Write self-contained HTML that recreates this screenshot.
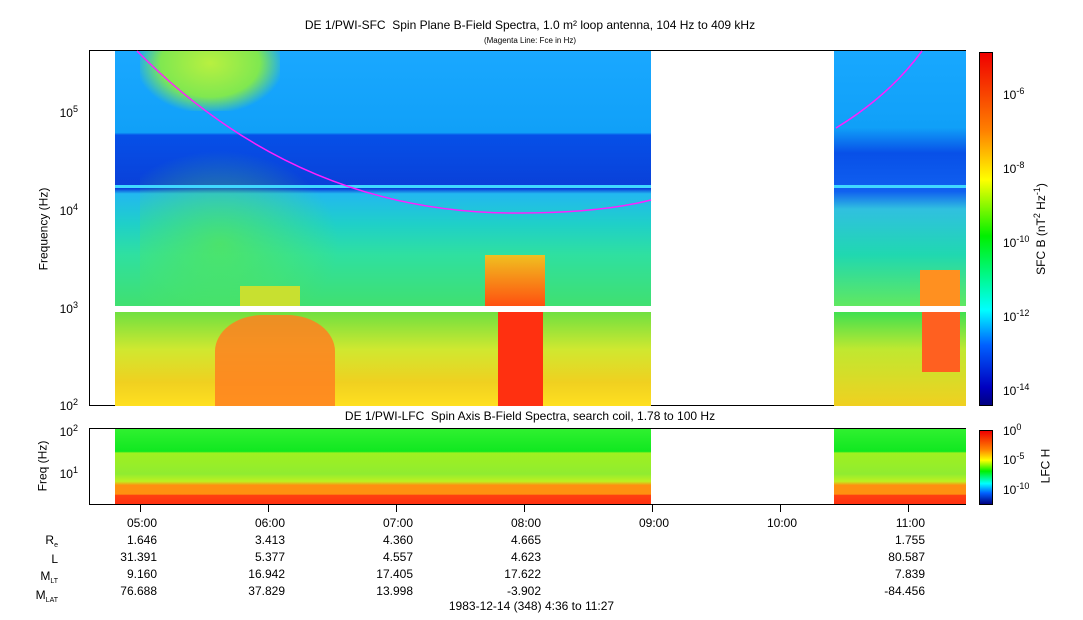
<!DOCTYPE html><html><head><style>
body{margin:0;width:1083px;height:620px;background:#fff;font-family:"Liberation Sans",sans-serif;position:relative;overflow:hidden;color:#000}
div{position:absolute}
.t{font-size:12px;white-space:nowrap;line-height:14px}
.r{text-align:right}
.tick{background:#000}
sup,sub{line-height:0}
.s{font-size:7px;position:relative;top:3px}
</style></head><body>
<div class="t" style="left:0;width:1060px;top:18px;text-align:center">DE 1/PWI-SFC&nbsp; Spin Plane B-Field Spectra, 1.0 m² loop antenna, 104 Hz to 409 kHz</div>
<div style="left:0;width:1060px;top:36px;text-align:center;font-size:8px">(Magenta Line: Fce in Hz)</div>

<div style="left:89px;top:50px;width:877px;height:356px;border:1px solid #000;box-sizing:border-box;background:#fff"></div>
<div style="left:115px;top:51px;width:536px;height:255px;background:linear-gradient(#1aa8ff 0%,#10a0f8 32%,#0650e8 33%,#0a40d8 54%,#22b8f0 56%,#1fd0c8 68%,#2fe0a0 80%,#40e070 100%)"></div>
<div style="left:140px;top:51px;width:140px;height:60px;background:radial-gradient(ellipse at 50% 20%,#b8f040 0%,#80e850 50%,rgba(30,170,255,0) 75%)"></div>
<div style="left:140px;top:150px;width:200px;height:156px;background:radial-gradient(ellipse at 40% 60%,rgba(90,230,80,.7) 0%,rgba(90,230,80,0) 70%)"></div>
<div style="left:115px;top:185px;width:536px;height:3px;background:#40d8ff"></div>
<div style="left:485px;top:255px;width:60px;height:51px;background:linear-gradient(#f0c020,#ff5010)"></div>
<div style="left:240px;top:286px;width:60px;height:20px;background:#c8e030"></div>
<div style="left:115px;top:312px;width:536px;height:94px;background:linear-gradient(#70e040,#d0e830 40%,#f0d020 75%,#ffe020)"></div>
<div style="left:215px;top:315px;width:120px;height:91px;background:#ff8020;border-radius:40% 40% 0 0;opacity:.85"></div>
<div style="left:498px;top:312px;width:45px;height:94px;background:#ff3010"></div>
<div style="left:834px;top:51px;width:132px;height:255px;background:linear-gradient(#18a8ff 0%,#10a0f8 30%,#0850e8 40%,#1060f0 55%,#30c0e0 62%,#20d8b0 80%,#60e860 100%)"></div>
<div style="left:834px;top:185px;width:132px;height:3px;background:#40d8ff"></div>
<div style="left:920px;top:270px;width:40px;height:36px;background:#ff9020"></div>
<div style="left:834px;top:312px;width:132px;height:94px;background:linear-gradient(#40e050,#c0e830 40%,#f0d020)"></div>
<div style="left:922px;top:312px;width:38px;height:60px;background:#ff6020"></div>
<svg style="position:absolute;left:0;top:0" width="1083" height="620"><path d="M137 51 Q300 215 520 213 Q600 213 651 200" fill="none" stroke="#ff20ff" stroke-width="1.5"/><path d="M836 128 Q890 95 922 51" fill="none" stroke="#ff20ff" stroke-width="1.5"/></svg>
<div style="left:90px;top:306px;width:876px;height:6px;background:#fff"></div>

<div class="t r" style="left:40px;width:38px;top:106px">10<sup style="font-size:9px">5</sup></div>
<div class="t r" style="left:40px;width:38px;top:204px">10<sup style="font-size:9px">4</sup></div>
<div class="t r" style="left:40px;width:38px;top:302px">10<sup style="font-size:9px">3</sup></div>
<div class="t r" style="left:40px;width:38px;top:399px">10<sup style="font-size:9px">2</sup></div>
<div class="t" style="left:2px;top:222px;transform:rotate(-90deg)">Frequency (Hz)</div>

<div style="left:979px;top:52px;width:14px;height:354px;border:1px solid #000;box-sizing:border-box;background:linear-gradient(#f00000,#ff8000 22%,#ffff00 36%,#00f000 52%,#00ffff 73%,#0060ff 83%,#0000c0 95%,#000080)"></div>
<div class="t" style="left:1003px;top:88px">10<sup style="font-size:9px">-6</sup></div>
<div class="t" style="left:1003px;top:162px">10<sup style="font-size:9px">-8</sup></div>
<div class="t" style="left:1003px;top:236px">10<sup style="font-size:9px">-10</sup></div>
<div class="t" style="left:1003px;top:310px">10<sup style="font-size:9px">-12</sup></div>
<div class="t" style="left:1003px;top:384px">10<sup style="font-size:9px">-14</sup></div>
<div class="t" style="left:995px;top:222px;transform:rotate(-90deg)">SFC B (nT<sup style="font-size:9px">2</sup> Hz<sup style="font-size:9px">-1</sup>)</div>

<div class="t" style="left:0;width:1060px;top:409px;text-align:center">DE 1/PWI-LFC&nbsp; Spin Axis B-Field Spectra, search coil, 1.78 to 100 Hz</div>
<div style="left:89px;top:428px;width:877px;height:77px;border:1px solid #000;box-sizing:border-box"></div>
<div style="left:115px;top:429px;width:536px;height:75px;background:linear-gradient(#30f030 0%,#10e820 30%,#a0f020 32%,#90ec30 60%,#c0f020 70%,#ff9010 75%,#ff9010 87%,#ff4010 88%,#ff3010)"></div>
<div style="left:834px;top:429px;width:132px;height:75px;background:linear-gradient(#30f030 0%,#10e820 30%,#a0f020 32%,#90ec30 60%,#c0f020 70%,#ff9010 75%,#ff9010 87%,#ff4010 88%,#ff3010)"></div>
<div class="t r" style="left:40px;width:38px;top:425px">10<sup style="font-size:9px">2</sup></div>
<div class="t r" style="left:40px;width:38px;top:467px">10<sup style="font-size:9px">1</sup></div>
<div class="t" style="left:17px;top:459px;transform:rotate(-90deg)">Freq (Hz)</div>
<div style="left:979px;top:430px;width:14px;height:75px;border:1px solid #000;box-sizing:border-box;background:linear-gradient(#f00000,#ff8000 25%,#ffff00 40%,#00f000 55%,#00ffff 72%,#0060ff 85%,#000080)"></div>
<div class="t" style="left:1003px;top:424px">10<sup style="font-size:9px">0</sup></div>
<div class="t" style="left:1003px;top:453px">10<sup style="font-size:9px">-5</sup></div>
<div class="t" style="left:1003px;top:483px">10<sup style="font-size:9px">-10</sup></div>
<div class="t" style="left:1028px;top:459px;transform:rotate(-90deg)">LFC H</div>

<div class="tick" style="left:140px;top:505px;width:1px;height:7px"></div>
<div class="tick" style="left:268px;top:505px;width:1px;height:7px"></div>
<div class="tick" style="left:396px;top:505px;width:1px;height:7px"></div>
<div class="tick" style="left:524px;top:505px;width:1px;height:7px"></div>
<div class="tick" style="left:652px;top:505px;width:1px;height:7px"></div>
<div class="tick" style="left:780px;top:505px;width:1px;height:7px"></div>
<div class="tick" style="left:908px;top:505px;width:1px;height:7px"></div>

<div class="t r" style="left:100px;width:57px;top:515px;line-height:17px">05:00<br>1.646<br>31.391<br>9.160<br>76.688</div>
<div class="t r" style="left:228px;width:57px;top:515px;line-height:17px">06:00<br>3.413<br>5.377<br>16.942<br>37.829</div>
<div class="t r" style="left:356px;width:57px;top:515px;line-height:17px">07:00<br>4.360<br>4.557<br>17.405<br>13.998</div>
<div class="t r" style="left:484px;width:57px;top:515px;line-height:17px">08:00<br>4.665<br>4.623<br>17.622<br>-3.902</div>
<div class="t r" style="left:612px;width:57px;top:515px;line-height:17px">09:00</div>
<div class="t r" style="left:740px;width:57px;top:515px;line-height:17px">10:00</div>
<div class="t r" style="left:868px;width:57px;top:515px;line-height:17px">11:00<br>1.755<br>80.587<br>7.839<br>-84.456</div>
<div class="t r" style="left:0;width:58px;top:532px;line-height:17px">R<span class="s">e</span><br>L<br>M<span class="s">LT</span><br>M<span class="s">LAT</span></div>
<div class="t" style="left:0;width:1063px;top:599px;text-align:center">1983-12-14 (348) 4:36 to 11:27</div>
</body></html>
